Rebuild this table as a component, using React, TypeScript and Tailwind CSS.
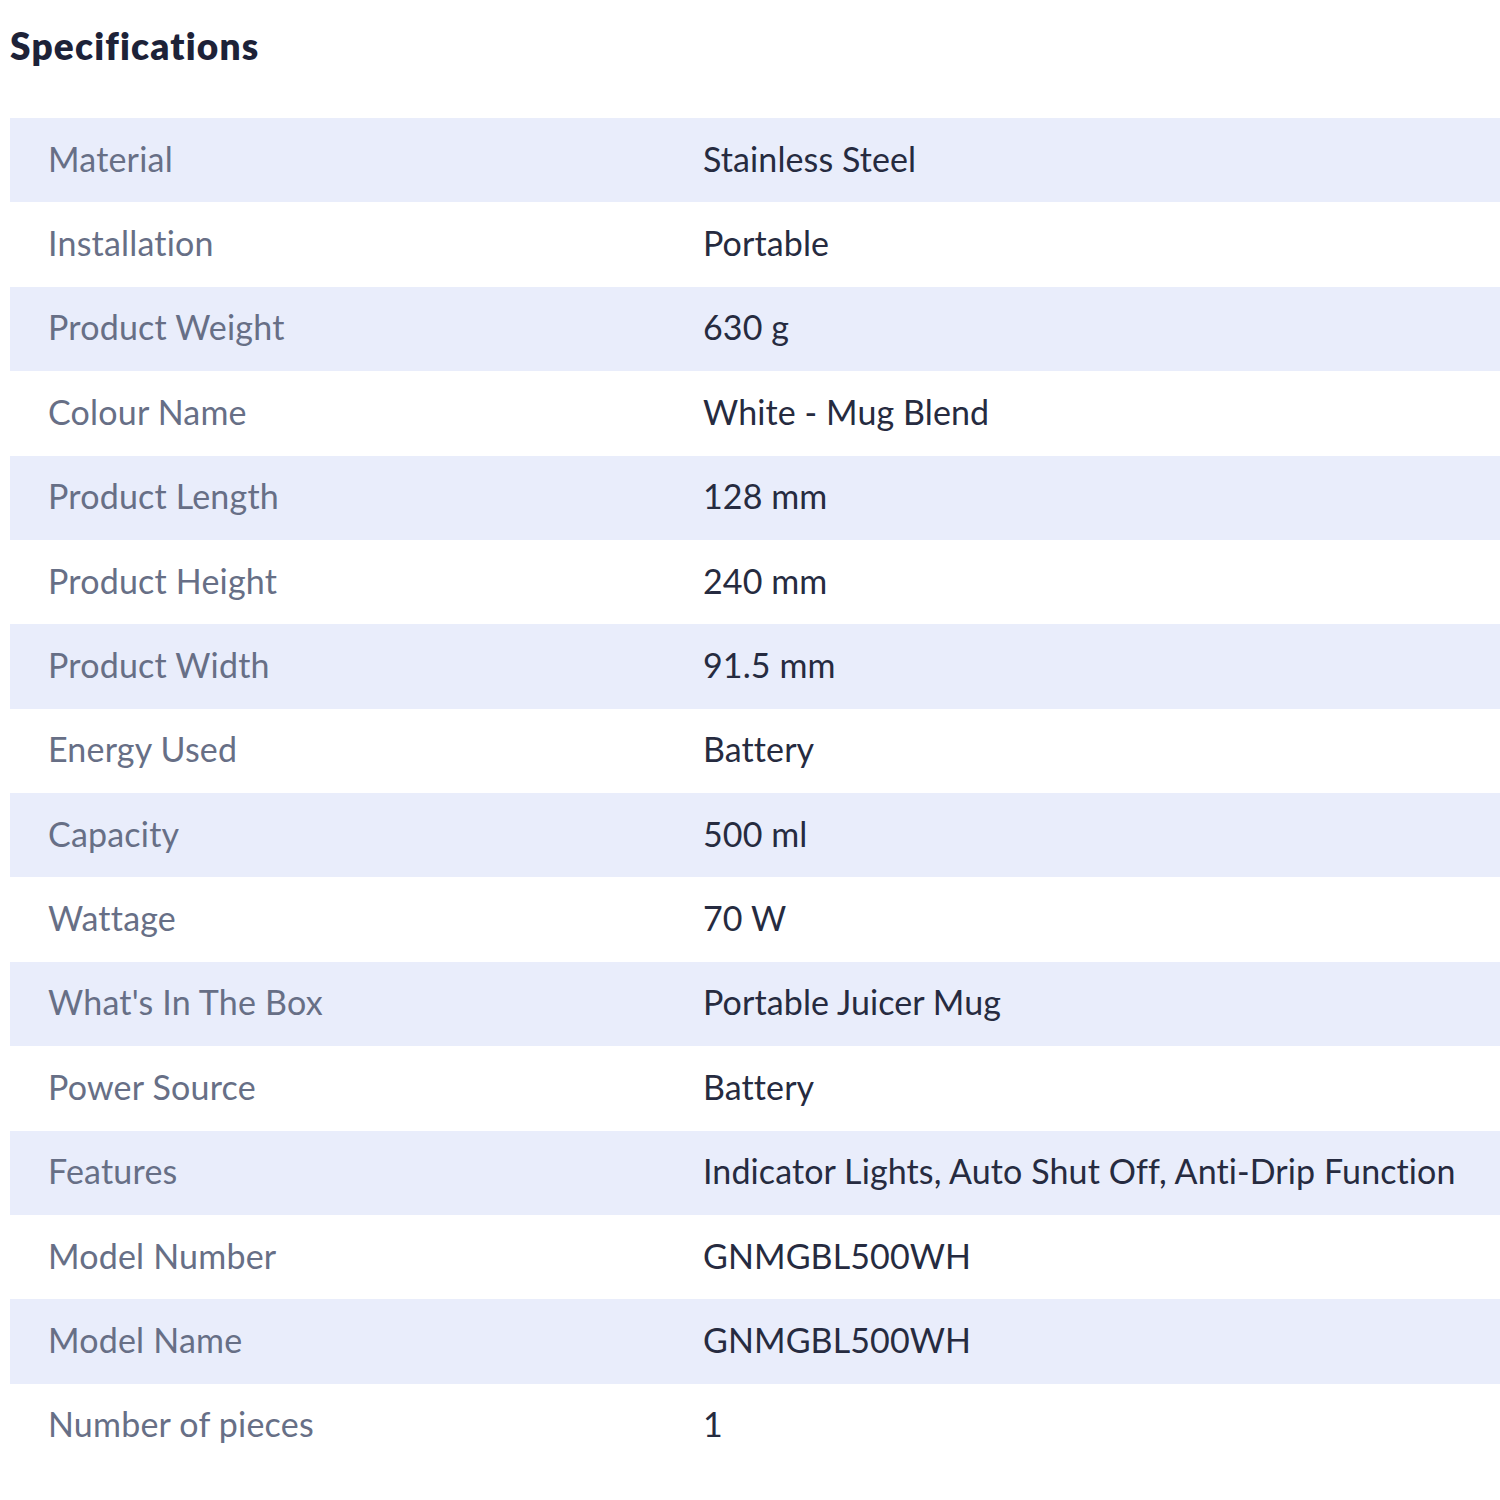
import React from "react";

const rows: [string, string][] = [
  ["Material", "Stainless Steel"],
  ["Installation", "Portable"],
  ["Product Weight", "630 g"],
  ["Colour Name", "White - Mug Blend"],
  ["Product Length", "128 mm"],
  ["Product Height", "240 mm"],
  ["Product Width", "91.5 mm"],
  ["Energy Used", "Battery"],
  ["Capacity", "500 ml"],
  ["Wattage", "70 W"],
  ["What's In The Box", "Portable Juicer Mug"],
  ["Power Source", "Battery"],
  ["Features", "Indicator Lights, Auto Shut Off, Anti-Drip Function"],
  ["Model Number", "GNMGBL500WH"],
  ["Model Name", "GNMGBL500WH"],
  ["Number of pieces", "1"],
];

export default function App() {
  return (
    <div className="w-[1500px] h-[1500px] bg-white" style={{ fontFamily: "Lato, 'Open Sans', sans-serif" }}>
      <div className="pl-[10px] pt-[23px] h-[118px]">
        <h2 className="text-[37px] leading-[46px] font-extrabold text-[#1d2238] tracking-[1.2px]">Specifications</h2>
      </div>
      <div className="ml-[10px] w-[1490px]">
        {rows.map(([k, v], i) => (
          <div
            key={k}
            className={`flex items-center h-[84.375px] pb-[4px] ${i % 2 === 0 ? "bg-[#e9edfb]" : "bg-white"}`}
          >
            <div className="w-[693px] pl-[38px] text-[34px] tracking-[0.2px] text-[#676f86]">{k}</div>
            <div className="flex-1 text-[34px] tracking-[0.1px] text-[#262b40]">{v}</div>
          </div>
        ))}
      </div>
    </div>
  );
}
